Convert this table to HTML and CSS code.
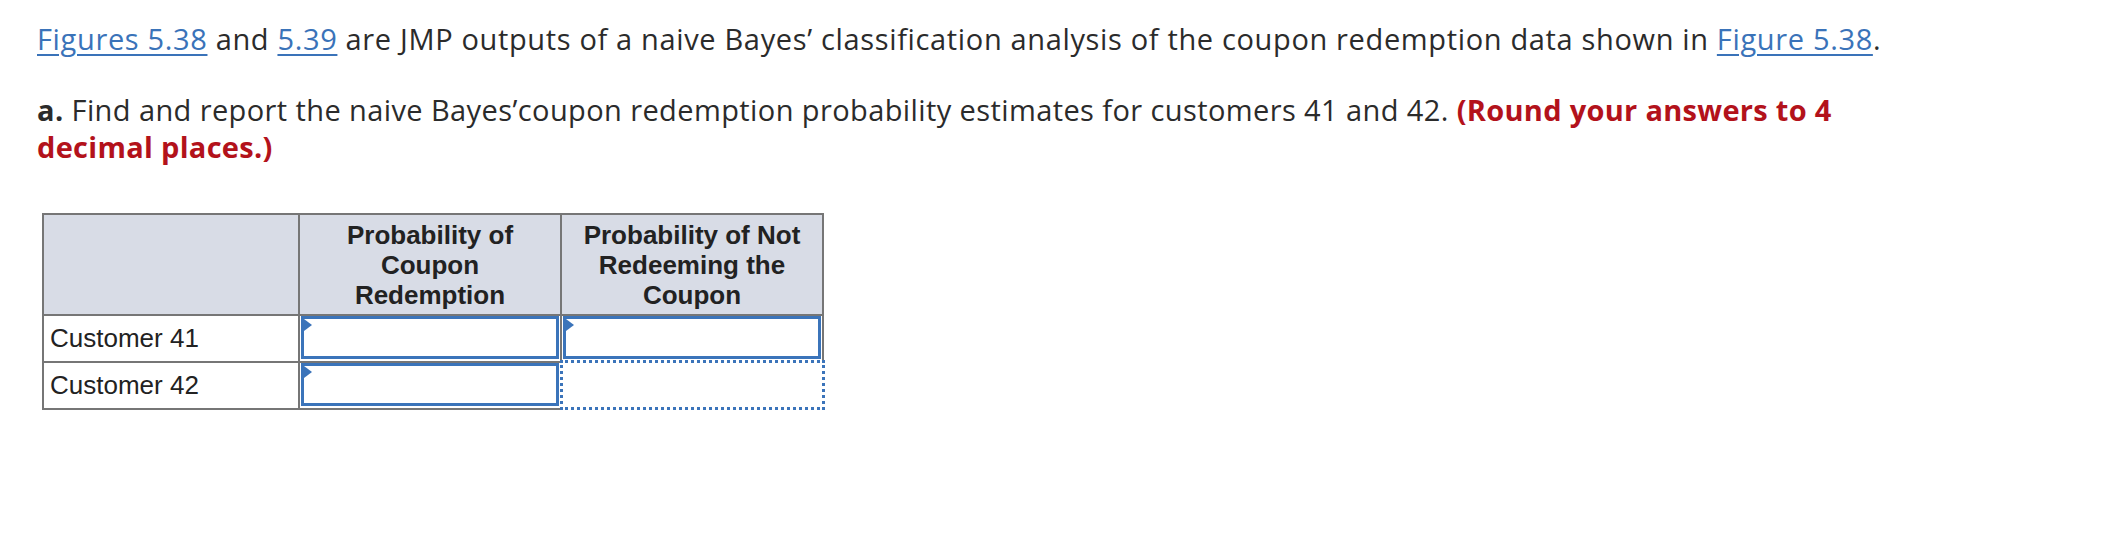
FILE: index.html
```html
<!DOCTYPE html>
<html>
<head>
<meta charset="utf-8">
<link rel="stylesheet" href="styles.css">
</head>
<body>
<div class="page">
  <p class="intro"><a class="lnk" href="#">Figures 5.38</a> and <a class="lnk" href="#">5.39</a> are JMP outputs of a naive Bayes’ classification analysis of the coupon redemption data shown in <a class="lnk" href="#">Figure 5.38</a>.</p>
  <p class="question"><b>a.</b> Find and report the naive Bayes’coupon redemption probability estimates for customers 41 and 42. <span class="note">(Round your answers to 4</span> <span class="note">decimal places.)</span></p>
  <table class="grid">
    <colgroup><col class="c1"><col class="c2"><col class="c3"></colgroup>
    <thead>
      <tr>
        <th></th>
        <th>Probability of<br>Coupon<br>Redemption</th>
        <th>Probability of Not<br>Redeeming the<br>Coupon</th>
      </tr>
    </thead>
    <tbody>
      <tr>
        <td class="label">Customer 41</td>
        <td class="cell"><div class="box"><span class="flag"></span></div></td>
        <td class="cell"><div class="box"><span class="flag"></span></div></td>
      </tr>
      <tr>
        <td class="label">Customer 42</td>
        <td class="cell"><div class="box"><span class="flag"></span></div></td>
        <td class="cell dotted"></td>
      </tr>
    </tbody>
  </table>
</div>
</body>
</html>
```

FILE: styles.css
```css
html, body {
  margin: 0;
  padding: 0;
  background: #ffffff;
}
.page {
  max-width: 1920px;
  padding: 0 0 0 37px;
  box-sizing: border-box;
  color: #2b2b2b;
  font-family: "Open Sans", "Liberation Sans", sans-serif;
}
.intro {
  margin: 0;
  padding-top: 20px;
  font-size: 29px;
  line-height: 37px;
  letter-spacing: 0.65px;
  font-variant-ligatures: none;
}
.lnk {
  color: #3a73b9;
  text-decoration: underline;
  text-decoration-thickness: 2px;
  text-underline-offset: 4px;
}
.question {
  margin: 34px 0 0 0;
  font-size: 29px;
  line-height: 37px;
  letter-spacing: 0.4px;
}
.question b {
  font-weight: 700;
}
.note {
  color: #b3121b;
  font-weight: 700;
  letter-spacing: 0.3px;
}
.grid {
  margin: 48px 0 0 5px;
  border-collapse: collapse;
  table-layout: fixed;
  font-family: "Liberation Sans", Arial, sans-serif;
  color: #222222;
}
.grid col.c1 { width: 256px; }
.grid col.c2 { width: 262px; }
.grid col.c3 { width: 262px; }
.grid th, .grid td {
  border: 2px solid #767676;
  padding: 0;
}
.grid th {
  background: #d8dce6;
  font-size: 26px;
  line-height: 30px;
  font-weight: 700;
  height: 99px;
  text-align: center;
  vertical-align: middle;
}
.grid td {
  height: 44px;
}
.grid td.label {
  font-size: 26px;
  padding-left: 6px;
  vertical-align: middle;
}
.grid td.cell {
  padding: 0 1px;
  vertical-align: top;
}
.box {
  position: relative;
  height: 37px;
  border: 3px solid #3b74ba;
  background: #ffffff;
}
.flag {
  position: absolute;
  left: 0;
  top: 0;
  width: 0;
  height: 0;
  border-left: 8px solid #3b74ba;
  border-top: 6px solid transparent;
  border-bottom: 6px solid transparent;
}
.grid td.dotted {
  border: 3px dotted #3b74ba;
}
```
